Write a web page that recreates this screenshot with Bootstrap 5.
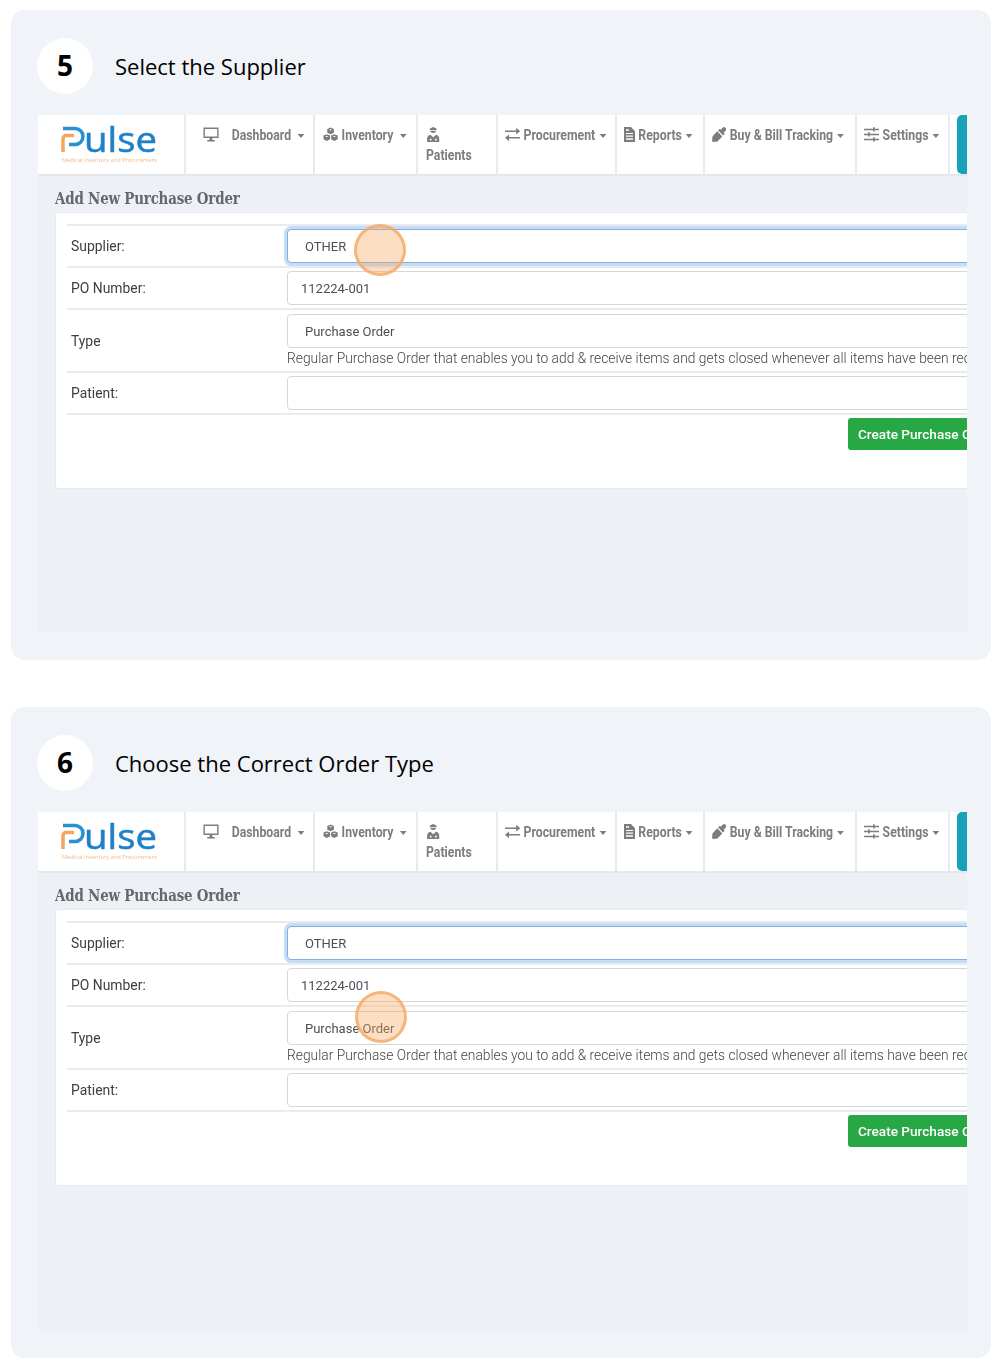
<!DOCTYPE html>
<html lang="en"><head><meta charset="utf-8"><title>Steps</title>
<link href="https://cdn.jsdelivr.net/npm/bootstrap@5.3.0/dist/css/bootstrap.min.css" rel="stylesheet">
<style>
html,body{background:#fff;margin:0;padding:0}
.guide{width:1000px;padding:10px 9px 0 11px}
.step-panel{background:#f0f3f8;border-radius:14px;height:650px;padding:28px 24px 27px 27px;margin-bottom:47px}
.step-panel:last-child{height:651px;margin-bottom:0}
.step-head{height:56px;margin-bottom:21px;gap:22px;font-family:"Open Sans",sans-serif;color:#000;margin-left:-1px}
.step-num{width:56px;height:56px;background:#fff;border-radius:50%;font-size:28px;font-weight:700;padding-bottom:2px}
.step-title{font-size:22px;line-height:1}
.shot{position:relative;width:929px;height:518px;overflow:hidden;background:#edf0f4;filter:blur(.35px);font-family:Roboto,sans-serif}
.topbar{height:61px;background:#fff;border-bottom:2px solid #e4e7eb;width:929px}
.brand{width:148px;height:59px;border-right:2px solid #e8ebee;flex:none}
.brand svg{display:block}
.nav-cell{height:59px;border-right:2px solid #e8ebee;flex:none;padding:11px 0 0 6.5px;color:#7d7d7d;font-weight:700;font-size:14.5px;line-height:20px;white-space:nowrap;overflow:hidden}
.nav-cell.lead-cell{padding-left:17px}
.nav-in{display:inline-block;transform:scaleX(.845);transform-origin:0 0}
.nav-in svg{fill:#7d7d7d;vertical-align:-2px;margin-right:4px;height:15px}
.lead-cell svg{margin-right:15px}
.w13{width:13px}.w15{width:15px}.w17{width:17px}.w18{width:18px}.w19{width:19px}
.caret-down{display:inline-block;border:4px solid transparent;border-left-width:4.5px;border-right-width:4.5px;border-top-color:#7d7d7d;border-bottom:0;margin-left:5px;vertical-align:2px}
.w-cell-a{width:129px}.w-cell-b{width:103px}.w-cell-c{width:80px}.w-cell-d{width:119px}.w-cell-e{width:88px}.w-cell-f{width:152px}.w-cell-g{width:93px}
.w-cell-a .caret-down,.w-cell-b .caret-down{margin-left:8px}
.nav-cell.w-cell-b,.nav-cell.w-cell-c{padding-left:7.5px}
.teal-btn{width:20px;height:59px;background:#17a2b8;border-radius:5px;margin-left:7px;flex:none}
.page-title{font-family:"DejaVu Serif",serif;font-weight:700;font-size:16px;color:#63686d;line-height:20px;padding:13px 0 3px 17px;letter-spacing:-.25px;white-space:nowrap;transform:scaleX(.84);transform-origin:17px 0}
.form-box{margin-left:17px;width:958px;height:277px;background:#fff;border:1px solid #e6e9ed;border-radius:3px;padding:11px 12px 0 11px;font-size:14px;color:#444}
.frow{border-top:2px solid #e9ecef;height:42px;align-items:center}
.frow.tall{height:63px}
.frow.tall .flabel{padding-top:2px}
.frow.tall .fctl{margin-top:1px}
.frow.end{height:2px}
.flabel{width:220px;padding-left:4px;flex:none;color:#3a3f44;font-size:13.9px}
.fctl{flex:1;height:34px;border:1px solid #d4d7da;border-radius:4px;background:#fff;line-height:33px;color:#495057;font-size:13px}
.fctl.sel{padding-left:17px}
.fctl.txt{padding-left:13px}
.fctl.focus{border-color:#80b0e6;box-shadow:0 0 0 3px #c7dcf5}
.fhelp{font-weight:300;color:#444;white-space:nowrap;line-height:22px;margin-top:-1px;font-size:13.8px}
.go-btn{margin:3px 0 0 auto;width:152px;height:32px;background:#28a745;color:#fff;border-radius:3px;font-size:13.6px;font-weight:500;line-height:33px;padding-left:10px;white-space:nowrap}
.pin{position:absolute;width:52px;height:52px;border-radius:50%;background:rgba(247,168,96,.38);border:3px solid rgba(244,170,105,.8)}
.pin-a{left:316px;top:109px}
.pin-b{left:317px;top:179px}
</style></head><body>
<svg class="d-none" xmlns="http://www.w3.org/2000/svg">
<symbol id="i-monitor" viewBox="0 0 17 15" preserveAspectRatio="none"><path d="M.5.5h16v10.500H.5zM2 2v7.500h13V2zM4.500 13h8v1.500h-8zM7 11h3v2H7z" fill-rule="evenodd"/></symbol>
<symbol id="i-cubes" viewBox="0 0 15 14" preserveAspectRatio="none"><path fill-rule="evenodd" d="M7.500.5l3.300 1.300v3.500L7.500 6.700 4.200 5.300V1.800zM7.500 2 5.900 2.600 7.500 3.200 9.100 2.600zM3.800 6.700 7 8v3.500l-3.200 1.500L.5 11.500V8zM3.800 8.200 2.200 8.800l1.600.6 1.600-.6zM11.200 6.700 14.500 8v3.500L11.200 13 8 11.500V8zM11.200 8.200l-1.600.6 1.600.6 1.600-.6z"/></symbol>
<symbol id="i-patient" viewBox="0 0 13 16" preserveAspectRatio="none"><path fill-rule="evenodd" d="M3.500 1.500 6.500 0l3 1.500v2h-6zM3.700 4.300h5.600a2.900 2.900 0 0 1-5.600 0zM1 16v-3.500A4.500 4.500 0 0 1 4 8.300l2.500 2.500L9 8.300a4.500 4.500 0 0 1 3 4.200V16zM3.500 12.500v2H5v-2zM8.200 12.500v2h1.500v-2z"/></symbol>
<symbol id="i-swap" viewBox="0 0 15 13" preserveAspectRatio="none"><path d="M0 3h11V.6l4 3-4 3V4.400H0zM15 8.600H4V6.400L0 9.400l4 3V10h11z"/></symbol>
<symbol id="i-file" viewBox="0 0 11 14" preserveAspectRatio="none"><path fill-rule="evenodd" d="M0 0h7l4 4v10H0zM2 2v1.500h3V2zM2 5.500v1h7v-1zM2 8v1h7V8zM2 10.500V12h7v-1.500z"/></symbol>
<symbol id="i-dropper" viewBox="0 0 14 14" preserveAspectRatio="none"><path d="M13.200.8a2 2 0 0 0-2.800 0L8.600 2.600 7.600 1.600 6 3.200l4.800 4.800 1.600-1.600-1-1 1.800-1.800a2 2 0 0 0 0-2.800zM5.200 4 .8 8.400A2 2 0 0 0 .3 9.800V11L0 13l1 1 2-.3h1.200a2 2 0 0 0 1.400-.5L10 8.800z"/></symbol>
<symbol id="i-sliders" viewBox="0 0 15 13" preserveAspectRatio="none"><path d="M0 1.500h15v1.300H0zM0 5.800h15v1.300H0zM0 10.100h15v1.300H0zM9 .3h1.600v3.600H9zM4 4.600h1.600v3.600H4zM9 8.900h1.600v3.600H9z"/></symbol>
</svg>
<div class="guide">
<section class="step-panel">
<div class="step-head d-flex align-items-center"><div class="step-num d-flex align-items-center justify-content-center">5</div><div class="step-title">Select the Supplier</div></div>
<div class="shot">
<div class="topbar d-flex">
<div class="brand"><svg width="146" height="59" viewBox="0 0 146 59"><path d="M25 13.500H37a8 8 0 0 1 0 16H31" fill="none" stroke="#2b8fd6" stroke-width="3.500"/><path d="M36 20.500H28a3 3 0 0 0-3 3V37" fill="none" stroke="#f5a55c" stroke-width="3.500"/><text x="46" y="36.500" font-family="Open Sans,sans-serif" font-size="34" fill="#1f80c8" stroke="#1f80c8" stroke-width=".5" textLength="73" lengthAdjust="spacingAndGlyphs">ulse</text><text x="24" y="47" font-family="Open Sans,sans-serif" font-size="4.600" fill="#f2b98a" textLength="95" lengthAdjust="spacingAndGlyphs">Medical Inventory and Procurement</text></svg></div>
<div class="nav-cell lead-cell w-cell-a"><div class="nav-in"><svg class="w19"><use href="#i-monitor"/></svg>Dashboard<i class="caret-down"></i></div></div>
<div class="nav-cell w-cell-b"><div class="nav-in"><svg class="w18"><use href="#i-cubes"/></svg>Inventory<i class="caret-down"></i></div></div>
<div class="nav-cell w-cell-c"><div class="nav-in"><svg class="w17"><use href="#i-patient"/></svg><br>Patients</div></div>
<div class="nav-cell w-cell-d"><div class="nav-in"><svg class="w18"><use href="#i-swap"/></svg>Procurement<i class="caret-down"></i></div></div>
<div class="nav-cell w-cell-e"><div class="nav-in"><svg class="w13"><use href="#i-file"/></svg>Reports<i class="caret-down"></i></div></div>
<div class="nav-cell w-cell-f"><div class="nav-in"><svg class="w17"><use href="#i-dropper"/></svg>Buy &amp; Bill Tracking<i class="caret-down"></i></div></div>
<div class="nav-cell w-cell-g"><div class="nav-in"><svg class="w18"><use href="#i-sliders"/></svg>Settings<i class="caret-down"></i></div></div>
<div class="teal-btn"></div>
</div>
<div class="page-title">Add New Purchase Order</div>
<div class="form-box">
<div class="frow d-flex"><div class="flabel">Supplier:</div><div class="fctl sel focus">OTHER</div></div>
<div class="frow d-flex"><div class="flabel">PO Number:</div><div class="fctl txt">112224-001</div></div>
<div class="frow tall d-flex"><div class="flabel">Type</div><div class="flex-grow-1"><div class="fctl sel">Purchase Order</div><div class="fhelp">Regular Purchase Order that enables you to add &amp; receive items and gets closed whenever all items have been received</div></div></div>
<div class="frow d-flex"><div class="flabel">Patient:</div><div class="fctl"></div></div>
<div class="frow end d-flex"></div>
<div class="d-flex"><div class="go-btn">Create Purchase Order</div></div>
</div>
<div class="pin pin-a"></div>
</div>
</section>
<section class="step-panel">
<div class="step-head d-flex align-items-center"><div class="step-num d-flex align-items-center justify-content-center">6</div><div class="step-title">Choose the Correct Order Type</div></div>
<div class="shot">
<div class="topbar d-flex">
<div class="brand"><svg width="146" height="59" viewBox="0 0 146 59"><path d="M25 13.500H37a8 8 0 0 1 0 16H31" fill="none" stroke="#2b8fd6" stroke-width="3.500"/><path d="M36 20.500H28a3 3 0 0 0-3 3V37" fill="none" stroke="#f5a55c" stroke-width="3.500"/><text x="46" y="36.500" font-family="Open Sans,sans-serif" font-size="34" fill="#1f80c8" stroke="#1f80c8" stroke-width=".5" textLength="73" lengthAdjust="spacingAndGlyphs">ulse</text><text x="24" y="47" font-family="Open Sans,sans-serif" font-size="4.600" fill="#f2b98a" textLength="95" lengthAdjust="spacingAndGlyphs">Medical Inventory and Procurement</text></svg></div>
<div class="nav-cell lead-cell w-cell-a"><div class="nav-in"><svg class="w19"><use href="#i-monitor"/></svg>Dashboard<i class="caret-down"></i></div></div>
<div class="nav-cell w-cell-b"><div class="nav-in"><svg class="w18"><use href="#i-cubes"/></svg>Inventory<i class="caret-down"></i></div></div>
<div class="nav-cell w-cell-c"><div class="nav-in"><svg class="w17"><use href="#i-patient"/></svg><br>Patients</div></div>
<div class="nav-cell w-cell-d"><div class="nav-in"><svg class="w18"><use href="#i-swap"/></svg>Procurement<i class="caret-down"></i></div></div>
<div class="nav-cell w-cell-e"><div class="nav-in"><svg class="w13"><use href="#i-file"/></svg>Reports<i class="caret-down"></i></div></div>
<div class="nav-cell w-cell-f"><div class="nav-in"><svg class="w17"><use href="#i-dropper"/></svg>Buy &amp; Bill Tracking<i class="caret-down"></i></div></div>
<div class="nav-cell w-cell-g"><div class="nav-in"><svg class="w18"><use href="#i-sliders"/></svg>Settings<i class="caret-down"></i></div></div>
<div class="teal-btn"></div>
</div>
<div class="page-title">Add New Purchase Order</div>
<div class="form-box">
<div class="frow d-flex"><div class="flabel">Supplier:</div><div class="fctl sel focus">OTHER</div></div>
<div class="frow d-flex"><div class="flabel">PO Number:</div><div class="fctl txt">112224-001</div></div>
<div class="frow tall d-flex"><div class="flabel">Type</div><div class="flex-grow-1"><div class="fctl sel">Purchase Order</div><div class="fhelp">Regular Purchase Order that enables you to add &amp; receive items and gets closed whenever all items have been received</div></div></div>
<div class="frow d-flex"><div class="flabel">Patient:</div><div class="fctl"></div></div>
<div class="frow end d-flex"></div>
<div class="d-flex"><div class="go-btn">Create Purchase Order</div></div>
</div>
<div class="pin pin-b"></div>
</div>
</section>
</div>
</body></html>
